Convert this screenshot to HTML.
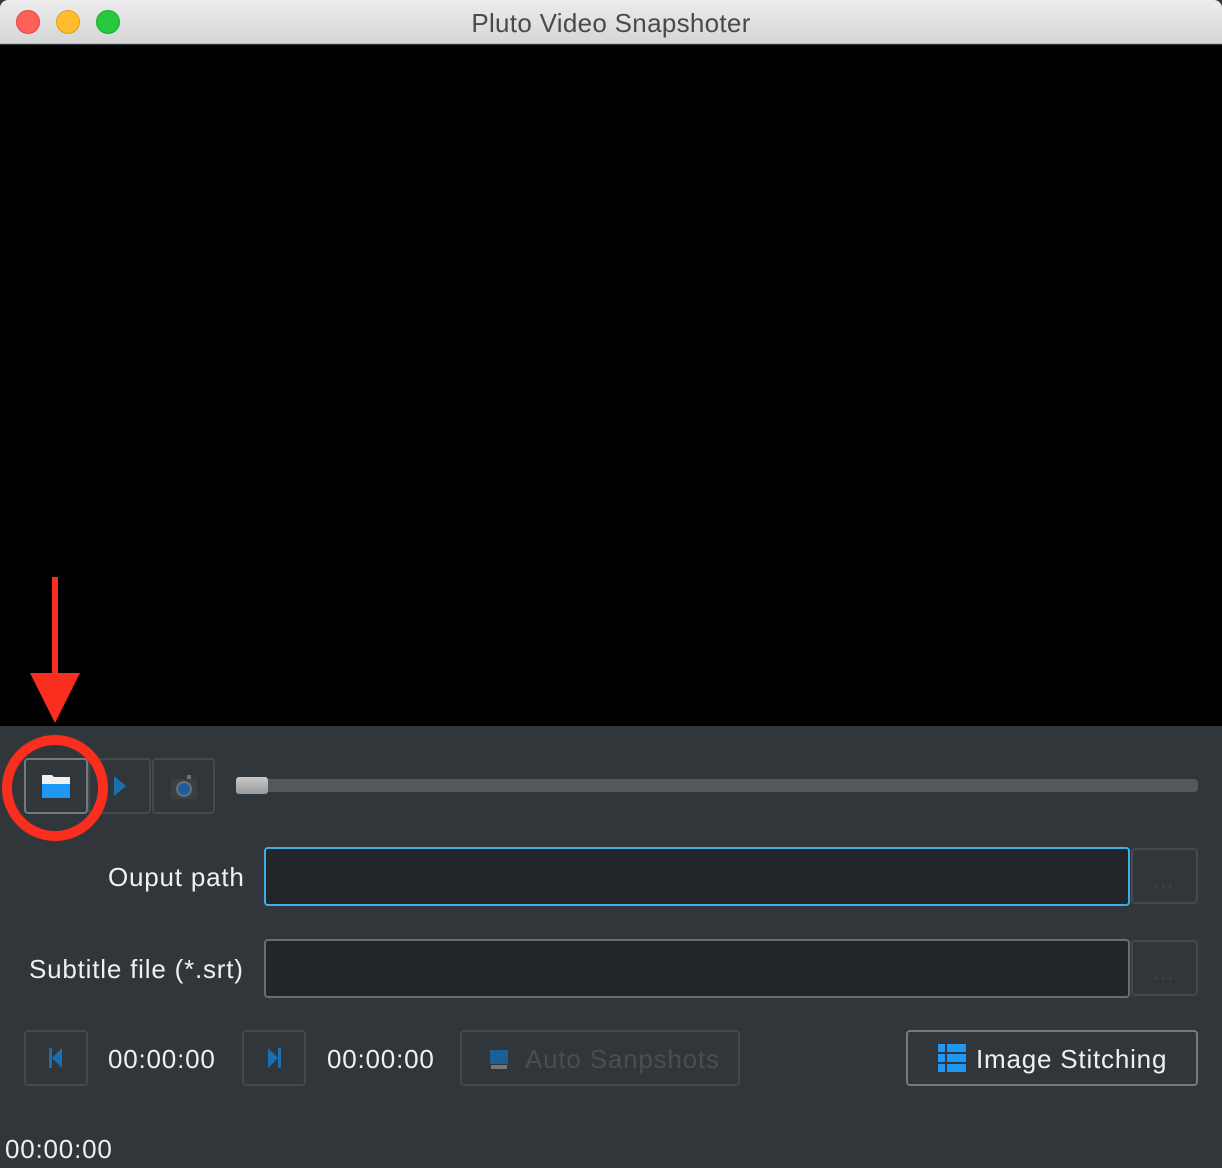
<!DOCTYPE html>
<html><head><meta charset="utf-8"><style>
*{margin:0;padding:0;box-sizing:border-box}
body{width:1222px;height:1168px;overflow:hidden;background:#31363b;font-family:"Liberation Sans",sans-serif;position:relative}
.a{position:absolute}
.title{left:0;top:0;width:1222px;height:44px;background:linear-gradient(#ececec,#d6d6d6);border-bottom:1px solid #b8b8b8;border-radius:8px 8px 0 0;text-align:center;line-height:46px;font-size:26px;letter-spacing:0.3px;color:#4a4a4a}
.dot{width:24px;height:24px;border-radius:50%;top:10px}
.btn{border:2px solid #45494e;border-radius:4px}
.lbl{color:#eff0f1;font-size:26px;letter-spacing:0.8px;white-space:nowrap}
.inp{background:#232629;border:2px solid #6a6d70;border-radius:4px}
.dd{color:#4d5155;text-align:center;line-height:66px;font-size:16px;letter-spacing:3px}
</style></head><body>
<div class="a title">Pluto Video Snapshoter</div>
<div class="a dot" style="left:16px;background:#fe5f57;border:1px solid #e1463f"></div>
<div class="a dot" style="left:56px;background:#febc2e;border:1px solid #dea123"></div>
<div class="a dot" style="left:96px;background:#28c840;border:1px solid #1aab29"></div>
<div class="a" style="left:0;top:45px;width:1222px;height:681px;background:#000"></div>

<div class="a btn" style="left:24px;top:758px;width:64px;height:56px;border-color:#76797c"></div>
<svg class="a" style="left:42px;top:774px" width="28" height="24"><path d="M0 1H10L12 3H28V12H0Z" fill="#f0f0f0"/><rect x="0" y="10" width="28" height="14" fill="#1d99f3"/></svg>
<div class="a btn" style="left:88px;top:758px;width:63px;height:56px"></div>
<svg class="a" style="left:112px;top:774px" width="16" height="24"><path d="M2 2L14 12L2 22Z" fill="#1a6fb0"/></svg>
<div class="a btn" style="left:152px;top:758px;width:63px;height:56px"></div>
<svg class="a" style="left:170px;top:773px" width="28" height="28"><rect x="1" y="6" width="26" height="20" fill="#3a3f44"/><circle cx="14" cy="16" r="7" fill="#1d5d9e" stroke="#6b7075" stroke-width="2"/><rect x="17" y="2" width="4" height="4" fill="#6b7075"/></svg>
<div class="a" style="left:236px;top:779px;width:962px;height:13px;background:#54585d;border-radius:4px"></div>
<div class="a" style="left:236px;top:777px;width:32px;height:17px;background:linear-gradient(#c8c8c8,#9a9a9a);border-radius:3px"></div>

<div class="a lbl" style="left:108px;top:862px">Ouput path</div>
<div class="a inp" style="left:264px;top:847px;width:866px;height:59px;border-color:#3daee9"></div>
<div class="a btn dd" style="left:1131px;top:848px;width:67px;height:56px">...</div>
<div class="a lbl" style="left:29px;top:954px">Subtitle file (*.srt)</div>
<div class="a inp" style="left:264px;top:939px;width:866px;height:59px"></div>
<div class="a btn dd" style="left:1131px;top:940px;width:67px;height:56px">...</div>

<div class="a btn" style="left:24px;top:1030px;width:64px;height:56px"></div>
<svg class="a" style="left:48px;top:1047px" width="16" height="22"><rect x="1" y="1" width="3" height="20" fill="#1a6fb0"/><path d="M14 1L4 11L14 21Z" fill="#1a6fb0"/></svg>
<div class="a lbl" style="left:108px;top:1044px">00:00:00</div>
<div class="a btn" style="left:242px;top:1030px;width:64px;height:56px"></div>
<svg class="a" style="left:266px;top:1047px" width="16" height="22"><rect x="12" y="1" width="3" height="20" fill="#1a6fb0"/><path d="M2 1L12 11L2 21Z" fill="#1a6fb0"/></svg>
<div class="a lbl" style="left:327px;top:1044px">00:00:00</div>
<div class="a btn" style="left:460px;top:1030px;width:280px;height:56px"></div>
<svg class="a" style="left:488px;top:1048px" width="24" height="24"><rect x="2" y="2" width="18" height="14" fill="#1a5f95"/><rect x="3" y="17" width="16" height="4" fill="#777"/></svg>
<div class="a lbl" style="left:525px;top:1044px;color:#4a4e52">Auto Sanpshots</div>
<div class="a btn" style="left:906px;top:1030px;width:292px;height:56px;border-color:#76797c"></div>
<svg class="a" style="left:938px;top:1044px" width="28" height="28"><g fill="#1d99f3"><rect x="0" y="0" width="7" height="8"/><rect x="9" y="0" width="19" height="8"/><rect x="0" y="10" width="7" height="8"/><rect x="9" y="10" width="19" height="8"/><rect x="0" y="20" width="7" height="8"/><rect x="9" y="20" width="19" height="8"/></g></svg>
<div class="a lbl" style="left:976px;top:1044px">Image Stitching</div>
<div class="a lbl" style="left:5px;top:1134px">00:00:00</div>

<svg class="a" style="left:0;top:560px" width="120" height="300">
<rect x="52" y="17" width="6" height="100" fill="#fa2e1e"/>
<path d="M30 113L80 113L55 163Z" fill="#fa2e1e"/>
<circle cx="55" cy="228" r="48" fill="none" stroke="#fa2e1e" stroke-width="10"/>
</svg>
</body></html>
